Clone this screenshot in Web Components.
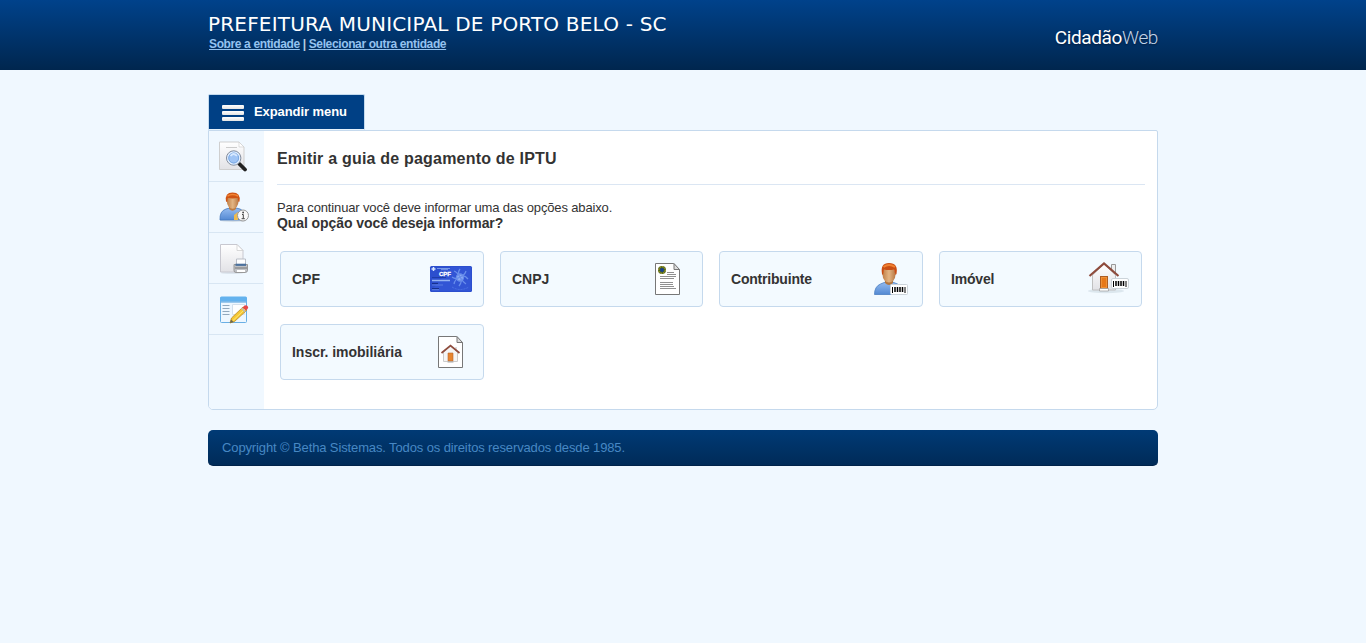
<!DOCTYPE html>
<html lang="pt-BR">
<head>
<meta charset="utf-8">
<title>Cidadão Web</title>
<style>
body{margin:0;background:#f0f8ff;color:#333;font:13px/16px "Liberation Sans",Arial,sans-serif}
</style>
</head>
<body>
<citizen-app></citizen-app>
<script>
const define = (name, html) => {
  const t = document.createElement('template');
  t.innerHTML = html;
  customElements.define(name, class extends HTMLElement {
    constructor() {
      super();
      this.attachShadow({mode: 'open'}).append(t.content.cloneNode(true));
    }
  });
};

const ICONS = {
  search: [32, 32, `<path d="M1.500 2H21l5 5V29.500H1.500z" fill="url(#pg)" stroke="#cfcfcf"/><path d="M21 2v5h5z" fill="#fff" stroke="#d0d0d0" stroke-width=".7"/><path d="M8 7.500h11" stroke="#ccc"/><path d="M21.500 24l5.500 5.500" stroke="#222" stroke-width="3.800" stroke-linecap="round"/><circle cx="15.700" cy="18" r="7.200" fill="#9fc4f5" stroke="#858c98" stroke-width="1"/><circle cx="15.700" cy="18" r="6" fill="none" stroke="#e8f1fd" stroke-width="1.200"/><circle cx="15.700" cy="18" r="5" fill="none" stroke="#6f9fdc" stroke-width=".8"/><path d="M12.500 16q3-4 6.500 0" stroke="#d6e8ff" stroke-width="1.800" fill="none"/>`],
  person: [32, 32, `<ellipse cx="15" cy="29.500" rx="13" ry="1.500" fill="#d5dfe8"/><path d="M2 29q-.5-9 6-11l4-1h6l4 1q5 2 5 11z" fill="url(#bl)" stroke="#4377bd" stroke-width=".8"/><path d="M11 15h7v3q-3.500 3.500-7 0z" fill="#bb7c45"/><ellipse cx="14.700" cy="10.500" rx="5.800" ry="7.300" fill="url(#sk)"/><path d="M8 10.500Q6.500 1.500 14.500 1.500q8.500 0 7 9l-1 .5-1-4q-5 .8-9.500 0L9 11z" fill="#cf5414"/><path d="M9.500 5q5-3 10.500 0" stroke="#f28535" stroke-width="1.500" fill="none"/><path d="M16 24l4-3v8h-4z" fill="#edbb50"/><circle cx="25" cy="24.500" r="5.500" fill="#f9f9f9" stroke="#999"/><path d="M24 23.500h1.300v4m-1.700.2h3.200" stroke="#444" fill="none"/><circle cx="25.100" cy="21.500" r=".9" fill="#444"/>`],
  print: [32, 32, `<ellipse cx="14" cy="31" rx="11" ry="1" fill="#dce5ee"/><path d="M2.500 2.500H19l6 6V30H2.500z" fill="url(#pg)" stroke="#c8c8d0"/><path d="M19 2.500v6h6z" fill="#fff" stroke="#c8c8c8" stroke-width=".7"/><path d="M18.500 17h9v6h-9z" fill="#fff" stroke="#b9bec7"/><path d="M16 22.500h13.500v6q-.5 2-2 2h-9.500q-2 0-2-2z" fill="#bfc1c5" stroke="#999"/><path d="M17.500 22.800h10.500" stroke="#4b719d" stroke-width="2.200"/><path d="M19 29h8" stroke="#fff" stroke-width="2"/><path d="M17 26h12" stroke="#777"/>`],
  edit: [32, 32, `<rect x="2.500" y="4.500" width="26" height="25" rx="1" fill="#eef7ff" stroke="#69afe5"/><path d="M2 8.500V5Q2 3.500 3.500 3.500h24Q29 3.500 29 5v3.500z" fill="#63b2ee"/><path d="M3 9h25" stroke="#4b9cdc"/><path d="M4.500 12.500h7m-7 3h7m-7 3h7m-7 3h7" stroke="#91a8bd"/><path d="M14.500 11.500h12v10h-12z" fill="#fff" stroke="#d4e1ed"/><path d="M12 30l1.500-5L25 14l3.500 3.500-12 11z" fill="#f5c735" stroke="#bb8a22" stroke-width=".8"/><path d="M15 27.500L27 16" stroke="#ffea76"/><path d="M24.500 14.500l1.500-1.500q2-1.500 3.500 0t0 3l-1.500 1.500z" fill="#e64848"/><path d="M23.500 15l3.700 3.700" stroke="#bbb" stroke-width="1.400"/><path d="M12 30l1-3.500 2.500 2.500z" fill="#665"/>`],
  cpf: [48, 40, `<rect x="3" y="7" width="42" height="26" rx="1.500" fill="#2c4fce"/><path d="M4 32L24 8h20v24z" fill="#375bdb" opacity=".5"/><path d="M6.500 8v4M4.500 10h4" stroke="#dce9ff" stroke-width="1.500"/><path d="M10 9.500h13M14 10.700h7" stroke="#8bacee" stroke-width=".8"/><text x="12" y="17" font-family="Liberation Sans,sans-serif" font-size="6" font-weight="bold" fill="#fff" stroke="#fff" stroke-width=".3">CPF</text><path d="M5 18.500h14" stroke="#1f3da9"/><path d="M5 21.500h18" stroke="#96b4f3" stroke-width="1.500"/><path d="M5 24.500h6m-6 5h7" stroke="#17308d"/><path d="M5 26h11m-11 4.700h7" stroke="#6488e5" stroke-width=".8"/><g fill="none" stroke="#7298f0" stroke-width="1.300" opacity=".85"><circle cx="33" cy="18.500" r="3.500" fill="#9dbcf8"/><path d="M33 10q-3 4 0 8t-1 9M25 18q4 3 8 0t8 2M27 12q3 1 6 6t6 7M39 12q-1 4-6 6t-6 7"/></g><path d="M25 28q8 5 17 0" stroke="#4c72e4" fill="none" stroke-dasharray="2 1"/>`],
  cnpj: [48, 40, `<path d="M8.500 4.500h18l6 6v25h-24z" fill="#fff" stroke="#777"/><path d="M27 4.500v6h5.500z" fill="#ddd" stroke="#777"/><path d="M20 13.500h7m-7 2h9m-16 2h16m-16 2h14m-14 4h13m-13 2h13m-13 2h14m-14 2h16" stroke="#909090"/><circle cx="15" cy="11" r="4" fill="#49651f"/><circle cx="15" cy="11" r="3.300" fill="none" stroke="#c9a92c" stroke-width="1" stroke-dasharray="1.500 1"/><circle cx="15" cy="11" r="1.900" fill="#173e92"/>`],
  contributor: [48, 40, `<path d="M8.500 35.500q0-8 6-10.500l5-2h7l5 2q5 2 5 10.500z" fill="url(#bl)" stroke="#4b7fc2" stroke-width=".8"/><path d="M19 20h8v4q-4 4-8 0z" fill="#b2763e"/><ellipse cx="23" cy="15.500" rx="6.500" ry="8" fill="url(#sk)"/><path d="M16 15Q14 4 23 4q9.500 0 7.500 11l-1 1-1.500-5.500q-5 1-10 0L17 16z" fill="#c94e14"/><path d="M17.500 8q5.500-4 11.500 0" stroke="#f08030" stroke-width="2" fill="none"/><rect x="24.500" y="25.500" width="17" height="10" rx="1" fill="#fff" stroke="#ccd4da"/><path d="M26.500 28v6M39 28v6" stroke="#000"/><path d="M29 28v5M31.500 28v5M34 28v5M36.500 28v5" stroke="#000" stroke-width="1.500"/>`],
  property: [48, 40, `<ellipse cx="20" cy="32" rx="18" ry="2.200" fill="#dce7ee"/><path d="M25.500 5.500h4v9h-4z" fill="#eee" stroke="#999"/><path d="M6.500 16L18 5l11.500 11v15h-23z" fill="url(#pg)" stroke="#c0c0c0"/><path d="M3.500 17L18 4.500 32.500 17" fill="none" stroke="#8e4b3c" stroke-width="2.200"/><rect x="14.500" y="17.500" width="7" height="12" fill="#ef9137" stroke="#ad5d22"/><path d="M16 19h4v9h-4z" fill="#e77819"/><path d="M13.500 29.500h9v2.500h-9z" fill="#fff" stroke="#999" stroke-width=".7"/><rect x="25.500" y="19.500" width="17" height="10" rx="1.500" fill="#fff" stroke="#ccd4da"/><path d="M27.500 22v6M40 22v6" stroke="#000"/><path d="M30 22v5M32.500 22v5M35 22v5M37.500 22v5" stroke="#000" stroke-width="1.500"/>`],
  registry: [48, 40, `<path d="M11.500 4.500h18l6 6v25h-24z" fill="#fff" stroke="#777"/><path d="M30 4.500v6h5.500z" fill="#ddd" stroke="#777"/><path d="M28 15h2v5h-2z" fill="#ddd"/><path d="M16.500 20l7-6 7 6v9.500h-14z" fill="#f5f5f5" stroke="#ccc"/><path d="M14.500 21l9-7.500 9 7.500" fill="none" stroke="#8e4b3c" stroke-width="1.700"/><path d="M21 21h5v8h-5z" fill="#e7852f" stroke="#b8662d" stroke-width=".6"/><path d="M20.500 30h6" stroke="#aaa"/>`]
};
const DEFS = `<defs><linearGradient id="pg" x2="0" y2="1"><stop stop-color="#fff"/><stop offset="1" stop-color="#e2e2e6"/></linearGradient><linearGradient id="bl" x2="0" y2="1"><stop stop-color="#95bcf0"/><stop offset="1" stop-color="#5389d3"/></linearGradient><linearGradient id="sk"><stop stop-color="#c08048"/><stop offset=".5" stop-color="#e3b583"/><stop offset="1" stop-color="#b87844"/></linearGradient></defs>`;

customElements.define('app-icon', class extends HTMLElement {
  connectedCallback() {
    if (this.shadowRoot) return;
    const [w, h, body] = ICONS[this.getAttribute('name')];
    this.attachShadow({mode: 'open'}).innerHTML = `<style>:host{display:block;flex:none}svg{display:block}</style><svg width="${w}" height="${h}" viewBox="0 0 ${w} ${h}">${DEFS}${body}</svg>`;
  }
});

define('app-header', `<style>
:host{display:block;height:70px;background:linear-gradient(#00428b,#00264e)}
.in{width:950px;margin:auto;display:flex;justify-content:space-between}
h1{margin:0;padding:11px 0 0;font:400 20px/26px "DejaVu Sans","Noto Sans",sans-serif;letter-spacing:.19px;color:#fff;white-space:nowrap}
nav{font-size:12px;line-height:14px;font-weight:bold;color:#b8cde0;white-space:nowrap;letter-spacing:-.37px;padding-left:1px}
a{color:#94c2ef;text-decoration:underline}
.logo{padding-top:26px;font:400 19px/24px Roboto,sans-serif;letter-spacing:-.38px;color:#fff;text-shadow:0 1px 2px #001c3c;white-space:nowrap}
.logo span{font-weight:300;color:#c3d4e6}
</style>
<div class="in"><div><h1>PREFEITURA MUNICIPAL DE PORTO BELO - SC</h1><nav><a>Sobre a entidade</a> | <a>Selecionar outra entidade</a></nav></div><div class="logo">Cidadão<span>Web</span></div></div>`);

define('menu-toggle', `<style>
:host{display:flex;box-sizing:border-box;width:157px;height:36px;border:1px solid #c3daee;border-bottom:1px solid #e6f1fb;background:#004085;border-radius:2px 2px 0 0;align-items:center;padding:0 0 1px 13px;gap:10px;color:#fff;font-weight:bold;letter-spacing:-.08px}
.bars{display:grid;gap:2px;width:22px;margin-top:3px}.bars i{height:4px;background:linear-gradient(#fff,#e4e4e4);border-radius:1px}
</style><div class="bars"><i></i><i></i><i></i></div><slot></slot>`);

define('side-item', `<style>
:host{display:block;box-sizing:border-box;height:51px;width:54px;padding:9px 0 0 9px;border-bottom:1px solid #d8e6f3}
</style><slot></slot>`);

define('option-card', `<style>
:host{display:flex;box-sizing:border-box;height:56px;border:1px solid #c5d9ed;border-radius:4px;background:#f3faff;padding:7px 0 0 11px}
.label{flex:0 0 135px;font-size:14px;line-height:40px;font-weight:bold;letter-spacing:var(--label-spacing,-.03px)}
</style><div class="label"><slot></slot></div><slot name="icon"></slot>`);

define('main-panel', `<style>
:host{display:flex;box-sizing:border-box;height:280px;border:1px solid #c5d9ed;border-radius:0 2px 5px 5px;background:#fff;overflow:hidden}
aside{flex:0 0 55px;background:#f0f8ff}
main{flex:1;padding:0 12px 0 13px}
h2{margin:0 0 15px;height:53px;border-bottom:1px solid #dbe6f3;font-size:16px;line-height:55px;letter-spacing:.2px;box-sizing:content-box}
p{margin:0;line-height:15px;letter-spacing:-.145px}
.q{font-size:14px;line-height:16px;font-weight:bold;letter-spacing:-.08px}
.grid{display:grid;grid-template-columns:204px 203px 204px 203px;gap:17px 16px;margin:20px 0 0 3px}
.tight{--label-spacing:-.2px}
</style>
<aside><side-item><app-icon name="search"></app-icon></side-item><side-item><app-icon name="person"></app-icon></side-item><side-item><app-icon name="print"></app-icon></side-item><side-item><app-icon name="edit"></app-icon></side-item></aside>
<main><h2>Emitir a guia de pagamento de IPTU</h2><p>Para continuar você deve informar uma das opções abaixo.</p><p class="q">Qual opção você deseja informar?</p>
<div class="grid">
<option-card>CPF<app-icon slot="icon" name="cpf"></app-icon></option-card>
<option-card>CNPJ<app-icon slot="icon" name="cnpj"></app-icon></option-card>
<option-card class="tight">Contribuinte<app-icon slot="icon" name="contributor"></app-icon></option-card>
<option-card class="tight">Imóvel<app-icon slot="icon" name="property"></app-icon></option-card>
<option-card>Inscr. imobiliária<app-icon slot="icon" name="registry"></app-icon></option-card>
</div></main>`);

define('app-footer', `<style>
:host{display:block;box-sizing:border-box;height:36px;margin-top:20px;border-radius:5px;background:linear-gradient(#003a75,#002b58);border-bottom:1px solid #00234a;padding-left:14px;line-height:35px;color:#4788c4;letter-spacing:-.12px}
</style><slot></slot>`);

define('citizen-app', `<style>
:host{display:block}.wrap{width:950px;margin:24px auto 0}
</style><app-header></app-header><div class="wrap"><menu-toggle>Expandir menu</menu-toggle><main-panel></main-panel><app-footer>Copyright © Betha Sistemas. Todos os direitos reservados desde 1985.</app-footer></div>`);
</script>
</body>
</html>
